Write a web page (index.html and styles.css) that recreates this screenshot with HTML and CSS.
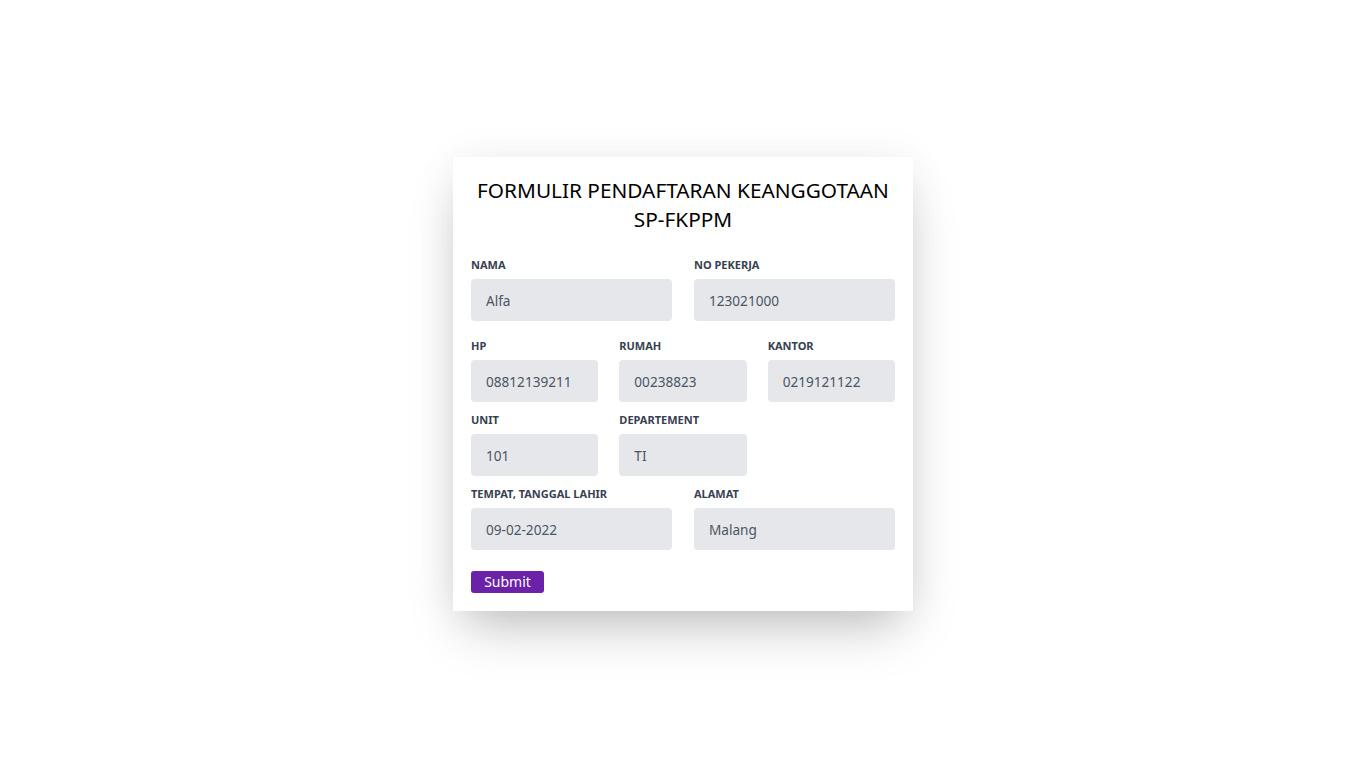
FILE: index.html
```html
<!DOCTYPE html>
<html lang="id">
<head>
<meta charset="utf-8">
<title>Formulir Pendaftaran Keanggotaan SP-FKPPM</title>
<link rel="stylesheet" href="styles.css">
</head>
<body>
<main class="page">
  <form class="card">
    <h1 class="title">FORMULIR PENDAFTARAN KEANGGOTAAN SP-FKPPM</h1>
    <div class="row row-2 row-first">
      <div class="field"><label class="label">NAMA</label><input class="input" value="Alfa"></div>
      <div class="field"><label class="label">NO PEKERJA</label><input class="input" value="123021000"></div>
    </div>
    <div class="row row-3 row-second">
      <div class="field"><label class="label">HP</label><input class="input" value="08812139211"></div>
      <div class="field"><label class="label">RUMAH</label><input class="input" value="00238823"></div>
      <div class="field"><label class="label">KANTOR</label><input class="input" value="0219121122"></div>
    </div>
    <div class="row row-3">
      <div class="field"><label class="label">UNIT</label><input class="input" value="101"></div>
      <div class="field"><label class="label">DEPARTEMENT</label><input class="input" value="TI"></div>
    </div>
    <div class="row row-2">
      <div class="field"><label class="label">TEMPAT, TANGGAL LAHIR</label><input class="input" value="09-02-2022"></div>
      <div class="field"><label class="label">ALAMAT</label><input class="input" value="Malang"></div>
    </div>
    <div class="actions"><button type="button" class="btn">Submit</button></div>
  </form>
</main>
</body>
</html>
```
FILE: styles.css
```css
* { box-sizing: border-box; }
html, body { margin: 0; padding: 0; background: #fff; }
body { font-family: "Noto Sans", "Open Sans", sans-serif; color: #000; }
.page {
  height: 768px;
  display: flex;
  align-items: center;
  justify-content: center;
}
.card {
  width: 460px;
  height: 454px;
  background: #fff;
  padding: 18px 18px 18px;
  box-shadow: 0 25px 50px -12px rgba(0,0,0,0.25), 0 0 40px rgba(0,0,0,0.05);
  display: flex;
  flex-direction: column;
}
.title {
  margin: 1px 0 0;
  font-size: 20.8px;
  font-weight: 400;
  line-height: 29px;
  text-align: center;
  color: #000;
}
.row { display: grid; margin-top: 10px; }
.row-first { margin-top: 23px; }
.row-second { margin-top: 17px; }
.row-2 { grid-template-columns: 1fr 1fr; column-gap: 22px; }
.row-3 { grid-template-columns: 1fr 1fr 1fr; column-gap: 21px; }
.field { display: flex; flex-direction: column; }
.label {
  font-size: 11px;
  font-weight: 700;
  line-height: 16px;
  color: #374151;
  margin-bottom: 6px;
}
.input {
  height: 42px;
  width: 100%;
  border: 0;
  border-radius: 4px;
  background: #e5e7eb;
  padding: 0 15px;
  font-family: inherit;
  font-size: 13.6px;
  color: #4b5563;
  outline: none;
}
.actions { margin-top: 20px; }
.btn {
  width: 73px;
  height: 22px;
  border: 0;
  border-radius: 3px;
  background: #6b21a8;
  color: #fff;
  font-family: inherit;
  font-size: 14px;
  line-height: 22px;
  padding: 0;
  cursor: pointer;
}
```
